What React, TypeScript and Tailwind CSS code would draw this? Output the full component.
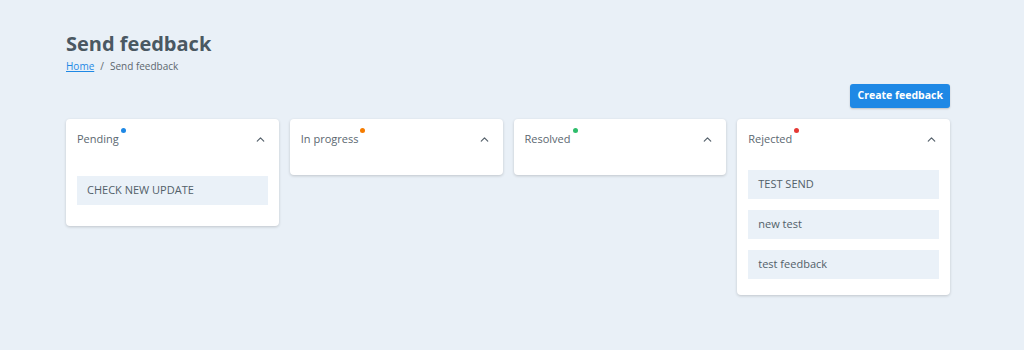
import { ChevronUp } from "lucide-react";

type Column = {
  title: string;
  dot: string;
  items: string[];
  bodyTop: string;
};

const columns: Column[] = [
  { title: "Pending", dot: "bg-[#1e88e5]", items: ["CHECK NEW UPDATE"], bodyTop: "pt-[17px] pb-[21px]" },
  { title: "In progress", dot: "bg-[#f57c00]", items: [], bodyTop: "pb-[16px]" },
  { title: "Resolved", dot: "bg-[#2ebd6b]", items: [], bodyTop: "pb-[16px]" },
  { title: "Rejected", dot: "bg-[#e53935]", items: ["TEST SEND", "new test", "test feedback"], bodyTop: "pt-[11px] pb-[16px]" },
];

function FeedbackColumn({ col }: { col: Column }) {
  return (
    <div className="rounded-[4px] bg-white shadow-[0_1px_3px_rgba(0,0,0,0.18)]">
      <div className="flex h-[40px] items-center justify-between pl-[11px] pr-[12px]">
        <div className="relative text-[11px] font-medium text-[#5b6770]">
          {col.title}
          <span className={`absolute -right-[7px] top-[-3px] h-[5px] w-[5px] rounded-full ${col.dot}`} />
        </div>
        <ChevronUp className="h-[13px] w-[13px] text-[#55616b]" strokeWidth={2.2} />
      </div>
      <div className={`flex flex-col gap-[11px] px-[11px] ${col.bodyTop}`}>
        {col.items.map((item) => (
          <div key={item} className="flex h-[29px] items-center bg-[#eaf1f8] px-[10px] text-[11px] text-[#526069]">
            {item}
          </div>
        ))}
      </div>
    </div>
  );
}

export default function App() {
  return (
    <div className="min-h-[350px] bg-[#e9f0f7] px-[66px] pt-[32px] font-['Open_Sans',sans-serif] text-[#47565f]">
      <h1 className="text-[20px] font-bold leading-[24px] text-[#4a5862]">Send feedback</h1>
      <div className="mt-[3px] flex items-center gap-[6px] text-[10px] text-[#5d676e]">
        <a href="#" className="text-[#1e88e5] underline">Home</a>
        <span>/</span>
        <span>Send feedback</span>
      </div>
      <div className="mt-[10px] flex justify-end pr-[8px]">
        <button className="h-[24px] rounded-[3px] bg-[#1e88e5] px-[7px] text-[10.5px] font-bold text-white shadow-[0_1px_2px_rgba(0,0,0,0.2)]">
          Create feedback
        </button>
      </div>
      <div className="mt-[11px] grid grid-cols-4 items-start gap-[11px] pr-[8px]">
        {columns.map((col) => (
          <FeedbackColumn key={col.title} col={col} />
        ))}
      </div>
    </div>
  );
}
